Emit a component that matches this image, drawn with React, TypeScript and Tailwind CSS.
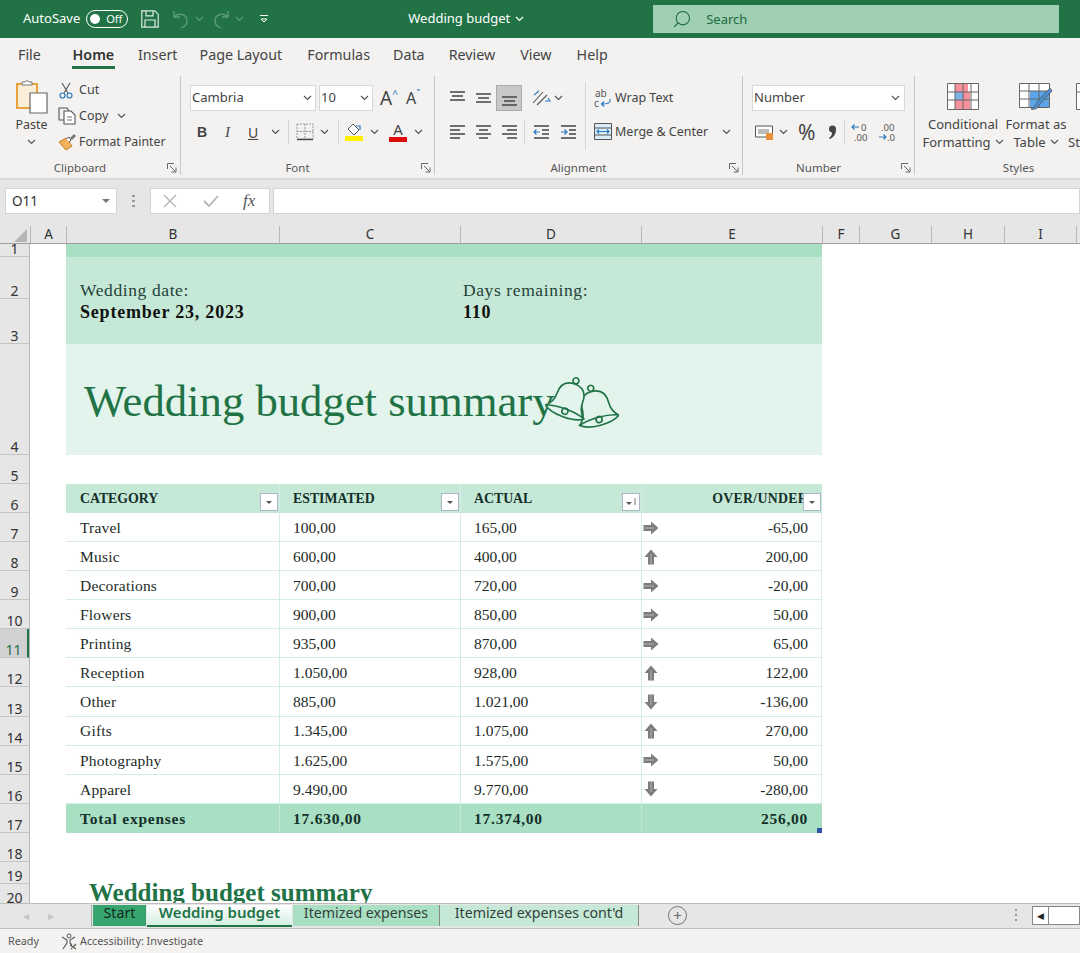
import { Search } from 'lucide-react'
import type { ReactNode } from 'react'

const rows = [
  { n: '1', h: 'h-[13px]' },
  { n: '2', h: 'h-[42px]' },
  { n: '3', h: 'h-[45px]' },
  { n: '4', h: 'h-[111px]' },
  { n: '5', h: 'h-[29px]' },
  { n: '6', h: 'h-[29px]' },
  { n: '7', h: 'h-[29.09px]' },
  { n: '8', h: 'h-[29.09px]' },
  { n: '9', h: 'h-[29.09px]' },
  { n: '10', h: 'h-[29.09px]' },
  { n: '11', h: 'h-[29.09px]', active: true },
  { n: '12', h: 'h-[29.09px]' },
  { n: '13', h: 'h-[29.09px]' },
  { n: '14', h: 'h-[29.09px]' },
  { n: '15', h: 'h-[29.09px]' },
  { n: '16', h: 'h-[29.09px]' },
  { n: '17', h: 'h-[29.09px]' },
  { n: '18', h: 'h-[29px]' },
  { n: '19', h: 'h-[22px]' },
  { n: '20', h: 'h-[22px]' },
]

const columns = [
  { l: 'A', w: 'w-[36px]' },
  { l: 'B', w: 'w-[213px]' },
  { l: 'C', w: 'w-[181px]' },
  { l: 'D', w: 'w-[181px]' },
  { l: 'E', w: 'w-[181px]' },
  { l: 'F', w: 'w-[37px]' },
  { l: 'G', w: 'w-[72px]' },
  { l: 'H', w: 'w-[73px]' },
  { l: 'I', w: 'w-[72px]' },
]

const budget = [
  ['Travel', '100,00', '165,00', 'right', '-65,00'],
  ['Music', '600,00', '400,00', 'up', '200,00'],
  ['Decorations', '700,00', '720,00', 'right', '-20,00'],
  ['Flowers', '900,00', '850,00', 'right', '50,00'],
  ['Printing', '935,00', '870,00', 'right', '65,00'],
  ['Reception', '1.050,00', '928,00', 'up', '122,00'],
  ['Other', '885,00', '1.021,00', 'down', '-136,00'],
  ['Gifts', '1.345,00', '1.075,00', 'up', '270,00'],
  ['Photography', '1.625,00', '1.575,00', 'right', '50,00'],
  ['Apparel', '9.490,00', '9.770,00', 'down', '-280,00'],
]

function Chev({ className = '', color = '#555' }: { className?: string; color?: string }) {
  return (
    <svg width="9" height="6" viewBox="0 0 9 6" className={className}>
      <path d="M1 1l3.5 3.5L8 1" fill="none" stroke={color} strokeWidth="1.2" />
    </svg>
  )
}

function Launcher() {
  return (
    <svg width="10" height="10" viewBox="0 0 10 10">
      <path d="M.5 6V.5H7M3 3l5.5 5.5M4.5 9H9V4.5" fill="none" stroke="#666" strokeWidth="1" />
    </svg>
  )
}

function Lines({ kind }: { kind: string }) {
  const paths: Record<string, string> = {
    top: 'M1 2h15M3 6h11M1 10h15',
    middle: 'M1 4h15M3 8h11M1 12h15',
    bottom: 'M1 7h15M3 11h11M1 15h15',
    left: 'M1 2h15M1 6h10M1 10h15M1 14h10',
    center: 'M1 2h15M4 6h9M1 10h15M4 14h9',
    right: 'M1 2h15M6 6h10M1 10h15M6 14h10',
  }
  return (
    <svg width="17" height="17" viewBox="0 0 17 17">
      <path d={paths[kind]} fill="none" stroke="#444" strokeWidth="1.3" />
    </svg>
  )
}

function Indent({ flip }: { flip?: boolean }) {
  return (
    <svg width="17" height="17" viewBox="0 0 17 17">
      <path d="M1 2h15M9 6h7M9 10h7M1 14h15" fill="none" stroke="#444" strokeWidth="1.3" />
      <path d={flip ? 'M1 8h6M4.5 5.5L7 8l-2.500 2.500' : 'M7 8H1M3.500 5.500L1 8l2.500 2.500'} fill="none" stroke="#2a78c0" strokeWidth="1.2" />
    </svg>
  )
}

function Arrow({ dir }: { dir: string }) {
  const rot = dir === 'up' ? '-rotate-90' : dir === 'down' ? 'rotate-90' : ''
  return (
    <svg width="16" height="14" viewBox="0 0 16 14" className={rot}>
      <path d="M0.5 4H8V0.5L15.5 7L8 13.500V10H0.5z" fill="#7d7d7d" />
      <path d="M1 7h10" stroke="#b5b5b5" strokeWidth="1" />
    </svg>
  )
}

function FilterBtn({ sorted }: { sorted?: boolean }) {
  return (
    <div className="absolute right-[1px] bottom-[2px] flex h-[18px] w-[18px] items-center justify-center border border-[#a9b7c6] bg-white">
      <svg width="12" height="12" viewBox="0 0 12 12">
        <path d={sorted ? 'M1 6h6L4 9z' : 'M3 5h6L6 8z'} fill="#555" />
        {sorted && <path d="M10 2v7" stroke="#777" strokeWidth="1" />}
      </svg>
    </div>
  )
}

function Bell({ x, y, r }: { x: number; y: number; r: number }) {
  return (
    <g transform={`translate(${x} ${y}) rotate(${r}) scale(0.85)`} fill="none" stroke="#217346" strokeWidth="1.9">
      <circle cx="0" cy="-24" r="3.5" fill="#e2f4eb" />
      <path d="M0 -20C-12 -20 -16 -12 -16 -3C-16 6 -19 11 -24 15C-14 23 14 23 24 15C19 11 16 6 16 -3C16 -12 12 -20 0 -20Z" fill="#e2f4eb" />
      <path d="M-24 15C-12 10 12 10 24 15" />
      <circle cx="0" cy="14" r="3.6" />
    </g>
  )
}

function Group({ w, label, launcher, children }: { w: string; label: string; launcher?: boolean; children: ReactNode }) {
  return (
    <div className={`${w} mt-[2px] flex h-[99px] flex-none flex-col border-r border-[#c8c6c4]`}>
      <div className="flex h-[84px] flex-none">{children}</div>
      <div className={`${launcher ? 'pr-[20px]' : ''} relative flex h-[15px] items-center justify-center text-[11.5px] text-[#555]`}>
        {label}
        {launcher && (
          <span className="absolute right-[3px] top-[3px]">
            <Launcher />
          </span>
        )}
      </div>
    </div>
  )
}

function Ribbon() {
  return (
    <div className="flex h-[104px] flex-none overflow-hidden bg-[#f3f2f1] text-[12.5px] text-[#444]">
      {/* clipboard */}
      <Group w="w-[181px]" label="Clipboard" launcher>
        <div className="flex w-[58px] flex-col items-center pl-[5px] pt-[4px]">
          <svg width="36" height="34" viewBox="0 0 36 34">
            <path d="M3 4h20v24H3z" fill="#fbeed9" stroke="#e8a33d" strokeWidth="2" />
            <path d="M8 5V2h3l2-1.500L15 2h3v3z" fill="#fff" stroke="#777" strokeWidth="1" />
            <path d="M16 13h17v20H16z" fill="#fff" stroke="#666" strokeWidth="1.2" />
          </svg>
          <span className="mt-[3px] text-[12.5px] leading-[16px]">Paste</span>
          <Chev className="mt-[6px]" />
        </div>
        <div className="flex flex-col pt-[1px]">
          <div className="flex h-[26px] items-center gap-[5px]">
            <svg width="16" height="17" viewBox="0 0 16 17">
              <path d="M4 1l6 10M12 1L6 11" fill="none" stroke="#555" strokeWidth="1.1" />
              <circle cx="4.5" cy="13.5" r="2.5" fill="none" stroke="#2a78c0" strokeWidth="1.2" />
              <circle cx="11.5" cy="13.5" r="2.5" fill="none" stroke="#2a78c0" strokeWidth="1.2" />
            </svg>
            Cut
          </div>
          <div className="flex h-[26px] items-center gap-[1px]">
            <svg width="20" height="18" viewBox="0 0 20 18">
              <path d="M8 13H1V1h8l2 3" fill="none" stroke="#555" strokeWidth="1.1" />
              <path d="M6 4h7l4 4v9H6z" fill="#fff" stroke="#555" strokeWidth="1.1" />
              <path d="M9 10h5M9 13h5" stroke="#777" strokeWidth="1" />
            </svg>
            Copy
            <Chev className="ml-[8px]" />
          </div>
          <div className="flex h-[26px] items-center gap-[1px] text-[12.3px]">
            <svg width="20" height="18" viewBox="0 0 20 18">
              <path d="M1 9l7-4 6 8-6 4z" fill="#f2b25c" stroke="#c97a1e" strokeWidth="1" />
              <path d="M8 6l3-2 2 3-2 2" fill="#fff" stroke="#555" strokeWidth="1" />
              <path d="M12 5l4-4 2 2-4 4z" fill="#777" />
            </svg>
            Format Painter
          </div>
        </div>
      </Group>

      {/* font */}
      <Group w="w-[254px]" label="Font" launcher>
        <div className="flex flex-col pl-[9px] pt-[9px]">
          <div className="flex h-[26px] items-center">
            <div className="flex h-[26px] w-[126px] items-center justify-between border border-[#d8d8d8] bg-white pl-[1px] pr-[3px] text-[13px]">
              Cambria
              <Chev />
            </div>
            <div className="ml-[3px] flex h-[26px] w-[54px] items-center justify-between border border-[#d8d8d8] bg-white pl-[1px] pr-[3px] text-[13px]">
              10
              <Chev />
            </div>
            <span className="ml-[7px] flex w-[26px] items-start text-[19px] leading-none">
              A<span className="text-[10px] leading-[10px] text-[#2a78c0]">^</span>
            </span>
            <span className="flex w-[26px] items-start text-[16px] leading-none">
              A<span className="text-[10px] leading-[8px] text-[#2a78c0]">ˇ</span>
            </span>
          </div>
          <div className="mt-[8px] flex h-[26px] items-center">
            <span className="w-[26px] pl-[7px] font-['Liberation_Sans',sans-serif] text-[14px] font-bold">B</span>
            <span className="w-[26px] pl-[9px] font-['Liberation_Serif',serif] text-[15px] italic">I</span>
            <span className="w-[29px] pl-[6px] text-[14px] underline">U</span>
            <Chev />
            <span className="ml-[8px] mr-[7px] h-[24px] w-px bg-[#d8d6d4]" />
            <svg width="18" height="18" viewBox="0 0 18 18">
              <path d="M1 1h16v15H1zM9 1v15M1 8.500h16" fill="none" stroke="#999" strokeWidth="1" strokeDasharray="2 1" />
              <path d="M1 16.500h16" stroke="#444" strokeWidth="1.4" />
            </svg>
            <Chev className="ml-[6px]" />
            <span className="ml-[9px] mr-[6px] h-[24px] w-px bg-[#d8d6d4]" />
            <span className="flex w-[18px] flex-col items-center">
              <svg width="16" height="13" viewBox="0 0 16 13">
                <path d="M7 1l6 6-5 5-6-6z" fill="#fff" stroke="#555" strokeWidth="1" />
                <path d="M10 3l4 0v4" fill="none" stroke="#2a78c0" strokeWidth="1.2" />
              </svg>
              <span className="h-[5px] w-[18px] bg-[#ffef00]" />
            </span>
            <Chev className="ml-[7px]" />
            <span className="ml-[10px] flex w-[18px] flex-col items-center text-[15px] leading-[13px]">
              A<span className="mt-[1px] h-[5px] w-[18px] bg-[#e00b0b]" />
            </span>
            <Chev className="ml-[7px]" />
          </div>
        </div>
      </Group>

      {/* alignment */}
      <Group w="w-[308px]" label="Alignment" launcher>
        <div className="flex w-[150px] flex-none flex-col pl-[9px] pt-[9px]">
          <div className="flex h-[26px] items-center">
            <span className="flex w-[26px] justify-center"><Lines kind="top" /></span>
            <span className="flex w-[26px] justify-center"><Lines kind="middle" /></span>
            <span className="flex h-[26px] w-[26px] items-center justify-center border border-[#aaa] bg-[#c8c8c8]"><Lines kind="bottom" /></span>
            <span className="ml-[9px] flex items-center gap-[3px]">
              <svg width="20" height="18" viewBox="0 0 20 18">
                <path d="M2 14L12 3M6 16l10-10" fill="none" stroke="#555" strokeWidth="1.1" />
                <path d="M3 6l5-4M14 12h5l-2-3" fill="none" stroke="#2a78c0" strokeWidth="1.2" />
              </svg>
              <Chev />
            </span>
          </div>
          <div className="mt-[8px] flex h-[26px] items-center">
            <span className="flex w-[26px] justify-center"><Lines kind="left" /></span>
            <span className="flex w-[26px] justify-center"><Lines kind="center" /></span>
            <span className="flex w-[26px] justify-center"><Lines kind="right" /></span>
            <span className="ml-[2px] mr-[8px] h-[24px] w-px bg-[#d8d6d4]" />
            <Indent />
            <span className="ml-[10px]"><Indent flip /></span>
          </div>
        </div>
        <div className="mt-[6px] h-[68px] w-px bg-[#d8d6d4]" />
        <div className="flex flex-col pl-[8px] pt-[9px]">
          <div className="flex h-[26px] items-center gap-[3px]">
            <svg width="18" height="24" viewBox="0 0 18 24">
              <text x="1" y="11" fontSize="10" fill="#555" fontFamily="Noto Sans, sans-serif">ab</text>
              <text x="0" y="21" fontSize="10" fill="#555" fontFamily="Noto Sans, sans-serif">c</text>
              <path d="M16 13c1 3-1 5-8 5M10 15.500L7.500 18l2.500 2.500" fill="none" stroke="#2a78c0" strokeWidth="1.2" />
            </svg>
            Wrap Text
          </div>
          <div className="mt-[8px] flex h-[26px] items-center gap-[3px]">
            <svg width="18" height="18" viewBox="0 0 18 18">
              <path d="M.5.5h17v16H.5zM.5 5h17M.5 12h17" fill="#d9ecf8" stroke="#555" strokeWidth="1" />
              <path d="M3 8.500h12M5 6.500l-2 2 2 2M13 6.500l2 2-2 2" fill="none" stroke="#2a78c0" strokeWidth="1.1" />
            </svg>
            Merge &amp; Center
            <Chev className="ml-[11px]" />
          </div>
        </div>
      </Group>

      {/* number */}
      <Group w="w-[172px]" label="Number" launcher>
        <div className="flex flex-col pl-[9px] pt-[9px]">
          <div className="flex h-[26px] w-[153px] items-center justify-between border border-[#d8d8d8] bg-white pl-[1px] pr-[4px] text-[13px]">
            Number
            <Chev />
          </div>
          <div className="mt-[8px] flex h-[26px] items-center">
            <svg width="20" height="17" viewBox="0 0 20 17" className="ml-[3px]">
              <path d="M.5 2h17v11H.5z" fill="#fff" stroke="#555" strokeWidth="1" />
              <path d="M3 5h11v5H3z" fill="#bbb" />
              <path d="M11 9h7v7h-7z" fill="#e8903a" />
            </svg>
            <Chev className="ml-[4px]" />
            <span className="ml-[10px] w-[22px] text-[21px] leading-none">%</span>
            <svg width="9" height="15" viewBox="0 0 9 15" className="ml-[8px]">
              <path d="M1 4a3.500 3.500 0 1 1 7 0c0 5-2 8-6 10l-1-1c2-1.500 3-3 3-5.500a3.500 3.500 0 0 1-3-3.500z" fill="#444" />
            </svg>
            <span className="ml-[7px] mr-[6px] h-[24px] w-px bg-[#d8d6d4]" />
            <svg width="19" height="24" viewBox="0 0 19 24">
              <path d="M8 7H1M3.500 4.500L1 7l2.500 2.500" fill="none" stroke="#2a78c0" strokeWidth="1.1" />
              <text x="10" y="11" fontSize="9.500" fill="#555" fontFamily="Noto Sans, sans-serif">0</text>
              <text x="3" y="21" fontSize="9.500" fill="#555" fontFamily="Noto Sans, sans-serif">.00</text>
            </svg>
            <svg width="19" height="24" viewBox="0 0 19 24" className="ml-[8px]">
              <text x="3" y="11" fontSize="9.500" fill="#555" fontFamily="Noto Sans, sans-serif">.00</text>
              <path d="M1 17h7M5.500 14.500L8 17l-2.500 2.500" fill="none" stroke="#2a78c0" strokeWidth="1.1" />
              <text x="9" y="21" fontSize="9.500" fill="#555" fontFamily="Noto Sans, sans-serif">.0</text>
            </svg>
          </div>
        </div>
      </Group>

      {/* styles */}
      <Group w="w-[208px]" label="Styles">
        <div className="flex pl-[11px] text-center text-[13px] leading-[18px]">
          <div className="flex w-[74px] flex-col items-center pt-[7px]">
            <svg width="32" height="27" viewBox="0 0 32 27">
              <path d="M.5.500h31v26H.500z" fill="#fff" stroke="#666" />
              <path d="M8 1h13v8H8zM8 17h15v9H8z" fill="#f7919b" />
              <path d="M8 9h8v8H8z" fill="#7fb2e6" />
              <path d="M16 9h7v8h-7z" fill="#f7919b" />
              <path d="M8 .5v26M16 .5v26M24 .5v26M.5 9h31M.5 17h31" stroke="#666" strokeWidth="1" />
            </svg>
            <span className="mt-[5px]">Conditional</span>
            <span className="flex items-center gap-[4px] whitespace-nowrap">Formatting <Chev /></span>
          </div>
          <div className="ml-[1px] flex w-[70px] flex-col items-center pt-[7px]">
            <svg width="34" height="28" viewBox="0 0 34 28">
              <path d="M.5.500h30v24H.500z" fill="#fff" stroke="#666" />
              <path d="M11 8h19v16H11z" fill="#5aa6e8" />
              <path d="M10 .5v24M20 .5v24M.5 8h30M.5 16h30" stroke="#666" strokeWidth="1" />
              <path d="M31 5L18 19l-2 4-4 3c3 1 7 0 8-4L33 8z" fill="#4a90d0" stroke="#555" strokeWidth=".8" />
            </svg>
            <span className="mt-[4px]">Format as</span>
            <span className="flex items-center gap-[4px]">Table <Chev /></span>
          </div>
          <div className="-ml-[3px] flex w-[50px] flex-col items-start pt-[7px]">
            <svg width="30" height="27" viewBox="0 0 30 27" className="ml-[8px]">
              <path d="M.5.500h28v26H.500zM.5 9h28" fill="#fff" stroke="#666" />
            </svg>
            <span className="mt-[5px] h-[18px]" />
            <span>Styles</span>
          </div>
        </div>
      </Group>
    </div>
  )
}

function Sheet() {
  return (
    <div className="relative flex h-[659px] flex-none overflow-hidden bg-white">
      <div className="w-[30px] flex-none border-r border-[#b8b8b8] bg-[#e6e6e6] text-[14px] text-[#333]">
        {rows.map((r) => (
          <div
            key={r.n}
            className={`${r.h} ${r.active ? 'border-r-2 border-r-[#217346] bg-[#d2d2d2] text-[#217346]' : ''} flex items-end justify-center overflow-hidden border-b border-[#c4c4c4] leading-[14px]`}
          >
            {r.n}
          </div>
        ))}
      </div>
      <div className="w-[792px] flex-none pl-[36px] font-['Liberation_Serif',serif] text-[15.5px] text-[#1d2b28]">
        <div className="h-[13px] bg-[#a9dfc3]" />
        <div className="flex h-[87px] bg-[#c6e9d7] pl-[14px] pt-[22px] text-[17.5px] leading-[22px] tracking-[0.6px]">
          <div className="w-[383px]">
            <div className="text-[#24423a]">Wedding date:</div>
            <div className="text-[18px] font-bold tracking-[0.8px] text-[#111]">September 23, 2023</div>
          </div>
          <div>
            <div className="text-[#24423a]">Days remaining:</div>
            <div className="text-[18px] font-bold tracking-[0.7px] text-[#111]">110</div>
          </div>
        </div>
        <div className="relative flex h-[111px] items-center bg-[#e2f4eb] pl-[18px] pt-[4px] text-[44.7px] text-[#217346]">
          <span>Wedding budget summary</span>
          <svg width="74" height="58" viewBox="0 0 74 58" className="absolute left-[479px] top-[31px]">
            <Bell x={51} y={33} r={-15} />
            <Bell x={24} y={25} r={20} />
          </svg>
        </div>
        <div className="h-[29px]" />
        <div className="flex h-[29px] bg-[#c6e9d7] text-[13.8px] font-bold text-[#14302a]">
          {['CATEGORY', 'ESTIMATED', 'ACTUAL'].map((t, i) => (
            <div key={t} className={`${i === 0 ? 'w-[214px] pl-[14px]' : 'w-[181px] pl-[13px]'} relative flex items-center border-r border-[#d6ecea] pt-[1px]`}>
              {t}
              <FilterBtn sorted={i === 2} />
            </div>
          ))}
          <div className="relative flex w-[180px] items-center justify-end overflow-hidden pr-[14px] pt-[1px]">
            <span className="whitespace-nowrap tracking-[0.3px]">OVER/UNDER</span>
            <FilterBtn />
          </div>
        </div>
        {budget.map((b) => (
          <div key={b[0]} className="flex h-[29.09px] border-b border-[#d6ecea]">
            <div className="flex w-[214px] items-center border-r border-[#d6ecea] pl-[14px] pt-[1px] tracking-[0.2px]">{b[0]}</div>
            <div className="flex w-[181px] items-center border-r border-[#d6ecea] pl-[13px] pt-[1px]">{b[1]}</div>
            <div className="flex w-[181px] items-center border-r border-[#d6ecea] pl-[13px] pt-[1px]">{b[2]}</div>
            <div className="flex w-[180px] items-center justify-between border-r border-[#d6ecea] pl-[1px] pr-[13px] pt-[1px]">
              <Arrow dir={b[3]} />
              {b[4]}
            </div>
          </div>
        ))}
        <div className="relative flex h-[29.09px] bg-[#a9dfc3] font-bold tracking-[0.75px] text-[#14302a]">
          <div className="flex w-[214px] items-center border-r border-[#bfe6d3] pl-[14px]">Total expenses</div>
          <div className="flex w-[181px] items-center border-r border-[#bfe6d3] pl-[13px]">17.630,00</div>
          <div className="flex w-[181px] items-center border-r border-[#bfe6d3] pl-[13px]">17.374,00</div>
          <div className="flex w-[180px] items-center justify-end pr-[14px]">256,00</div>
          <span className="absolute bottom-0 right-0 h-[5px] w-[5px] bg-[#2f55a8]" />
        </div>
        <div className="h-[45px]" />
        <div className="pl-[23px] text-[25px] font-bold leading-[30px] text-[#217346]">Wedding budget summary</div>
      </div>
    </div>
  )
}

function Tabs() {
  return (
    <div className="flex h-[26px] flex-none items-start border-y border-[#bdbdbd] bg-[#e6e6e6] text-[14.2px]">
      <div className="flex h-[24px] w-[91px] items-center pl-[23px] text-[12px] text-[#c4c4c4]">
        <span>◂</span>
        <span className="ml-[19px]">▸</span>
      </div>
      <div className="mt-[1px] flex h-[22px] items-start border-l border-[#aaa] pl-[1px]">
        <div className="flex h-[21px] w-[53px] items-center justify-center bg-[#38a56f] pb-[6px] text-[#102a1e]">Start</div>
        <div className="ml-[1px] flex h-[22px] w-[145px] items-center justify-center border-b-2 border-[#217346] bg-gradient-to-b from-white to-[#d4efe2] pb-[5px] text-[15px] font-semibold text-[#217346]">
          Wedding budget
        </div>
        <div className="ml-[1px] flex h-[21px] w-[147px] items-center justify-center border-r border-[#888] bg-[#a9dfc3] pb-[6px] text-[#33413b]">
          Itemized expenses
        </div>
        <div className="flex h-[21px] w-[199px] items-center justify-center border-r border-[#888] bg-[#c6e9d7] pb-[6px] text-[#33413b]">
          Itemized expenses cont'd
        </div>
      </div>
      <div className="ml-[29px] mt-[2px] flex h-[19px] w-[19px] items-center justify-center rounded-full border border-[#777] text-[15px] leading-none text-[#666]">
        +
      </div>
      <div className="ml-auto mt-[5px] flex h-[12px] w-[3px] flex-col justify-between">
        <span className="h-[2px] w-[2px] bg-[#999]" />
        <span className="h-[2px] w-[2px] bg-[#999]" />
        <span className="h-[2px] w-[2px] bg-[#999]" />
      </div>
      <div className="ml-[14px] mt-[2px] flex h-[19px] w-[48px] flex-none border border-[#888] bg-white">
        <span className="flex w-[16px] items-center justify-center border-r border-[#888] text-[9px] text-[#222]">◀</span>
      </div>
    </div>
  )
}

export default function App() {
  return (
    <div className="flex h-[953px] w-[1080px] flex-col overflow-hidden bg-[#f3f2f1] font-['Noto_Sans',sans-serif]">
      {/* title bar */}
      <div className="flex h-[38px] flex-none items-center bg-[#217346] text-[13px] text-white">
        <span className="ml-[23px]">AutoSave</span>
        <div className="ml-[6px] flex h-[18px] w-[42px] items-center rounded-full border border-white pl-[3px]">
          <span className="h-[10px] w-[10px] rounded-full bg-white" />
          <span className="ml-[6px] text-[11px]">Off</span>
        </div>
        <svg width="18" height="18" viewBox="0 0 18 18" className="ml-[13px]">
          <path d="M.8.8h13l3.400 3.400v13H.8zM5 .8v5h7v-5M4 17.200V10h10v7.200" fill="none" stroke="#fff" strokeWidth="1.200" opacity=".85" />
        </svg>
        <svg width="18" height="19" viewBox="0 0 18 19" className="ml-[13px]">
          <path d="M2 1v6h6M2 7c4-5 13-3 13 4 0 4-3 6-6 7" fill="none" stroke="#5f9d7c" strokeWidth="1.300" />
        </svg>
        <Chev className="ml-[5px]" color="#5f9d7c" />
        <svg width="18" height="19" viewBox="0 0 18 19" className="ml-[8px]">
          <path d="M16 1v6h-6M16 7c-4-5-13-3-13 4 0 4 3 6 6 7" fill="none" stroke="#5f9d7c" strokeWidth="1.300" />
        </svg>
        <Chev className="ml-[5px]" color="#5f9d7c" />
        <svg width="10" height="10" viewBox="0 0 10 10" className="ml-[15px]">
          <path d="M1 1.500h8M2 5l3 3 3-3z" fill="none" stroke="#fff" strokeWidth="1" />
        </svg>
        <span className="ml-[139px]">Wedding budget</span>
        <Chev className="ml-[5px]" color="#fff" />
        <div className="ml-[129px] flex h-[28px] w-[406px] items-center bg-[#9fd0b3] pl-[19px] text-[#1e6b40]">
          <Search size={20} strokeWidth={1.300} className="-scale-x-100" />
          <span className="ml-[14px] pt-[1px]">Search</span>
        </div>
      </div>

      {/* tabs */}
      <div className="flex h-[36px] flex-none items-start bg-[#f3f2f1] pl-[18px] pt-[7px] text-[14.3px] leading-[20px] text-[#444]">
        <span>File</span>
        <span className="ml-[31px] flex flex-col items-center font-semibold text-[#333]">
          Home
          <span className="mt-[1px] h-[3px] w-[43px] bg-[#217346]" />
        </span>
        <span className="ml-[23px]">Insert</span>
        <span className="ml-[22px]">Page Layout</span>
        <span className="ml-[25px]">Formulas</span>
        <span className="ml-[23px]">Data</span>
        <span className="ml-[24px]">Review</span>
        <span className="ml-[25px]">View</span>
        <span className="ml-[25px]">Help</span>
      </div>

      <Ribbon />

      {/* formula bar */}
      <div className="flex h-[48px] flex-none items-start border-t-2 border-[#d9d9d9] bg-[#e6e6e6] pl-[5px] pt-[8px]">
        <div className="flex h-[26px] w-[112px] items-center justify-between border border-[#d4d4d4] bg-white pl-[6px] pr-[6px] text-[13.5px] text-[#333]">
          O11
          <svg width="8" height="5" viewBox="0 0 8 5"><path d="M0 0h8L4 4z" fill="#777" /></svg>
        </div>
        <div className="ml-[15px] mt-[7px] flex h-[12px] w-[3px] flex-col justify-between">
          <span className="h-[2px] w-[3px] bg-[#999]" />
          <span className="h-[2px] w-[3px] bg-[#999]" />
          <span className="h-[2px] w-[3px] bg-[#999]" />
        </div>
        <div className="ml-[15px] flex h-[26px] w-[120px] items-center border border-[#d4d4d4] bg-white pl-[12px]">
          <svg width="14" height="14" viewBox="0 0 14 14"><path d="M1 1l12 12M13 1L1 13" stroke="#b5b5b5" strokeWidth="1.400" /></svg>
          <svg width="16" height="14" viewBox="0 0 16 14" className="ml-[26px]"><path d="M1 7l5 5L15 2" fill="none" stroke="#b5b5b5" strokeWidth="1.800" /></svg>
          <span className="ml-[24px] font-['Liberation_Serif',serif] text-[17px] italic text-[#555]">fx</span>
        </div>
        <div className="ml-[3px] h-[26px] flex-1 border border-[#d4d4d4] bg-white" />
      </div>

      {/* column headers */}
      <div className="flex h-[18px] flex-none border-b border-[#9f9f9f] bg-[#e6e6e6] text-[13.5px] leading-[17px] text-[#333]">
        <div className="flex w-[31px] flex-none items-end justify-end border-r border-[#b8b8b8] pb-[1px] pr-[3px]">
          <svg width="13" height="13" viewBox="0 0 13 13"><path d="M13 0v13H0z" fill="#b5b5b5" /></svg>
        </div>
        {columns.map((c) => (
          <div key={c.l} className={`${c.w} flex-none border-r border-[#b8b8b8] text-center`}>
            {c.l}
          </div>
        ))}
        <div className="flex-1" />
      </div>

      <Sheet />
      <Tabs />

      {/* status bar */}
      <div className="flex flex-1 items-center bg-[#f3f2f1] pl-[8px] pt-[1px] text-[10.8px] text-[#555]">
        <span>Ready</span>
        <svg width="17" height="17" viewBox="0 0 17 17" className="ml-[22px]">
          <circle cx="8" cy="3" r="2" fill="none" stroke="#555" />
          <path d="M1 4l5 3v3l-4 6M14 4l-5 3v3l2 2M9 12l6 4M15 11l-5 5" fill="none" stroke="#555" strokeWidth="1.100" />
        </svg>
        <span className="ml-[2px]">Accessibility: Investigate</span>
      </div>
    </div>
  )
}
